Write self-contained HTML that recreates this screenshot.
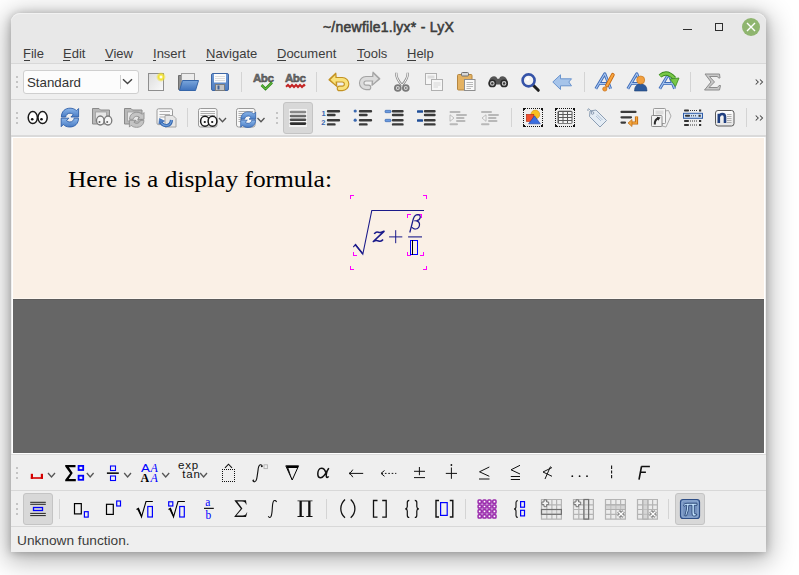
<!DOCTYPE html>
<html><head><meta charset="utf-8">
<style>
html,body{margin:0;padding:0;}
body{width:799px;height:575px;background:#ffffff;position:relative;overflow:hidden;font-family:"Liberation Sans",sans-serif;}
.a{position:absolute;}
svg{position:absolute;overflow:visible;}
#win{position:absolute;left:11px;top:13px;width:755px;height:539px;background:#efefef;border-radius:9px 9px 0 0;
 box-shadow:0 1px 8px 0 rgba(0,0,0,0.25),0 5px 26px 4px rgba(0,0,0,0.3);overflow:hidden;}
.menu{position:absolute;top:46px;font-size:13px;color:#3c3c3c;}
.menu u{text-decoration:none;}
.ul{position:absolute;height:1px;background:#3c3c3c;top:60px;}
.sep{position:absolute;width:1px;background:#d4d4d4;}
.hline{position:absolute;height:1px;}
.dots{position:absolute;width:2px;}
.dots i{position:absolute;left:0;width:2px;height:2px;background:#c4c4c4;}
</style></head>
<body>
<div id="win"></div>
<!-- title + menubar background -->
<div class="a" style="left:11px;top:13px;width:755px;height:50px;background:#e8e8e8;border-radius:9px 9px 0 0;box-shadow:inset 0 1px 0 #f2f2f2"></div>
<div class="hline" style="left:11px;top:63px;width:755px;background:#d8d8d8"></div>
<div class="a" style="left:0;top:19px;width:777px;text-align:center;font-weight:normal;font-size:14px;color:#3d3d3d;-webkit-text-stroke:0.55px #3d3d3d;letter-spacing:0.25px;">~/newfile1.lyx* - LyX</div>
<!-- window controls -->
<div class="a" style="left:683px;top:28.5px;width:8.5px;height:1.4px;background:#2e2e2e"></div>
<div class="a" style="left:715px;top:23px;width:6px;height:6px;border:1.5px solid #2e2e2e"></div>
<div class="a" style="left:742px;top:18px;width:18px;height:18px;border-radius:50%;background:#8fb56f"></div>
<svg style="left:742px;top:18px" width="18" height="18"><path d="M5 5L13 13M13 5L5 13" stroke="#fff" stroke-width="1.4"/></svg>
<!-- menu -->
<span class="menu" style="left:23px"><b style="font-weight:normal" class="m1">F</b>ile</span>
<span class="menu" style="left:63px"><b style="font-weight:normal" class="m1">E</b>dit</span>
<span class="menu" style="left:105px"><b style="font-weight:normal" class="m1">V</b>iew</span>
<span class="menu" style="left:153px"><b style="font-weight:normal" class="m1">I</b>nsert</span>
<span class="menu" style="left:206px"><b style="font-weight:normal" class="m1">N</b>avigate</span>
<span class="menu" style="left:277px"><b style="font-weight:normal" class="m1">D</b>ocument</span>
<span class="menu" style="left:357px"><b style="font-weight:normal" class="m1">T</b>ools</span>
<span class="menu" style="left:407px"><b style="font-weight:normal" class="m1">H</b>elp</span>
<div class="ul" style="left:24px;width:6px"></div>
<div class="ul" style="left:63px;width:7px"></div>
<div class="ul" style="left:105px;width:8px"></div>
<div class="ul" style="left:153px;width:3px"></div>
<div class="ul" style="left:206px;width:9px"></div>
<div class="ul" style="left:277px;width:9px"></div>
<div class="ul" style="left:357px;width:7px"></div>
<div class="ul" style="left:407px;width:9px"></div>
<!-- toolbar lines -->
<div class="hline" style="left:11px;top:99px;width:755px;background:#d8d8d8"></div>
<div class="hline" style="left:11px;top:135px;width:755px;height:2px;background:#dadada"></div>
<!-- doc frame -->
<div class="a" style="left:12px;top:137px;width:753px;height:317px;background:#ffffff"></div>
<div class="a" style="left:13px;top:138px;width:751px;height:160px;background:#faf0e6"></div>
<div class="hline" style="left:13px;top:298px;width:751px;background:#fdf7f0"></div>
<div class="a" style="left:13px;top:299px;width:751px;height:153px;background:#666666;border-top:1px solid #5c5c5c"></div>
<!-- math toolbar lines -->
<div class="hline" style="left:11px;top:454px;width:755px;background:#dddddd"></div>
<div class="hline" style="left:11px;top:490px;width:755px;background:#d8d8d8"></div>
<div class="hline" style="left:11px;top:526px;width:755px;background:#d8d8d8"></div>
<span class="a" style="left:17px;top:533px;font-size:13.7px;color:#3c3c3c">Unknown function.</span>

<!-- ===== toolbar 1 ===== -->
<div class="dots" style="left:16px;top:76px"><i style="top:0"></i><i style="top:5px"></i><i style="top:10px"></i></div>
<div class="a" style="left:23px;top:70px;width:114px;height:22px;border:1px solid #cfcfcf;border-radius:3px;background:#fcfcfc"></div>
<span class="a" style="left:27px;top:75px;font-size:13.3px;color:#333">Standard</span>
<div class="a" style="left:120px;top:75px;width:1px;height:14px;background:#d0d0d0"></div>
<svg style="left:122px;top:78px" width="11" height="7"><path d="M1 1.2L5.5 5.6L10 1.2" fill="none" stroke="#444" stroke-width="1.4"/></svg>
<div class="sep" style="left:241px;top:72px;height:20px"></div>
<div class="sep" style="left:316px;top:72px;height:20px"></div>
<div class="sep" style="left:584px;top:72px;height:20px"></div>
<div class="sep" style="left:690px;top:72px;height:20px"></div>
<svg style="left:755px;top:79px" width="9" height="6"><path d="M0.7 0.5L3.2 3L0.7 5.5M5 0.5L7.5 3L5 5.5" fill="none" stroke="#444" stroke-width="1.05"/></svg>
<!-- ===== toolbar 2 ===== -->
<div class="dots" style="left:16px;top:112px"><i style="top:0"></i><i style="top:5px"></i><i style="top:10px"></i></div>
<div class="sep" style="left:187px;top:108px;height:19px"></div>
<div class="dots" style="left:276px;top:112px"><i style="top:0"></i><i style="top:5px"></i><i style="top:10px"></i></div>
<div class="a" style="left:283px;top:102px;width:28px;height:30px;border:1px solid #c4c4c4;border-radius:3px;background:#d8d8d8"></div>
<div class="sep" style="left:511px;top:108px;height:19px"></div>
<div class="sep" style="left:746px;top:108px;height:19px"></div>
<svg style="left:755px;top:115px" width="9" height="6"><path d="M0.7 0.5L3.2 3L0.7 5.5M5 0.5L7.5 3L5 5.5" fill="none" stroke="#444" stroke-width="1.05"/></svg>
<!-- ===== math toolbar 1 ===== -->
<div class="dots" style="left:16px;top:467px"><i style="top:0"></i><i style="top:5px"></i><i style="top:10px"></i></div>
<!-- ===== math toolbar 2 ===== -->
<div class="dots" style="left:16px;top:503px"><i style="top:0"></i><i style="top:5px"></i><i style="top:10px"></i></div>
<div class="a" style="left:23px;top:493px;width:28px;height:30px;border:1px solid #c4c4c4;border-radius:3px;background:#d8d8d8"></div>
<div class="sep" style="left:59px;top:499px;height:20px"></div>
<div class="sep" style="left:326px;top:499px;height:20px"></div>
<div class="sep" style="left:465px;top:499px;height:20px"></div>
<div class="sep" style="left:668px;top:499px;height:20px"></div>
<div class="a" style="left:675px;top:493px;width:28px;height:30px;border:1px solid #c4c4c4;border-radius:3px;background:#d8d8d8"></div>
<!-- ===== document ===== -->
<span id="doctext" class="a" style="left:68px;top:167px;font-family:'Liberation Serif',serif;font-size:23px;color:#000;white-space:nowrap;transform:scaleX(1.105);transform-origin:0 0">Here is a display formula:</span>

<!-- ===== toolbar 1 icons ===== -->
<svg style="left:0;top:0" width="799" height="575">
<defs>
<linearGradient id="gNew" x1="0" y1="0" x2="1" y2="1"><stop offset="0" stop-color="#dcdcdc"/><stop offset="1" stop-color="#fafafa"/></linearGradient>
<radialGradient id="gStar"><stop offset="0" stop-color="#fffbd0"/><stop offset="0.5" stop-color="#f2e230"/><stop offset="1" stop-color="#f2e230" stop-opacity="0"/></radialGradient>
<linearGradient id="gFold" x1="0" y1="0" x2="0" y2="1"><stop offset="0" stop-color="#7aa6dc"/><stop offset="1" stop-color="#3f72bc"/></linearGradient>
<linearGradient id="gSave" x1="0" y1="0" x2="0" y2="1"><stop offset="0" stop-color="#6f9ad6"/><stop offset="1" stop-color="#4d7cc0"/></linearGradient>
</defs>
<!-- new -->
<rect x="148.5" y="73.5" width="15" height="17" fill="url(#gNew)" stroke="#8e8e8e"/>
<circle cx="161" cy="77" r="5" fill="url(#gStar)"/>
<circle cx="161" cy="77" r="1.2" fill="#fffde8"/>
<!-- open -->
<path d="M178.5 75.5 H186 L187.5 77 H194.5 V89.5 H178.5 Z" fill="#8f8f8f" stroke="#6e6e6e"/>
<rect x="181.5" y="73.5" width="13" height="10" fill="#ececec" stroke="#a0a0a0"/>
<path d="M182.5 80.5 L198.5 80.5 L195.5 90.5 L179.5 90.5 Z" fill="url(#gFold)" stroke="#3565a8"/>
<!-- save -->
<rect x="211.5" y="73.5" width="17" height="17" rx="1.5" fill="url(#gSave)" stroke="#3e66a4"/>
<rect x="214" y="74" width="12" height="8.5" fill="#fbfbfb"/>
<path d="M215 76.5H225M215 78.5H225M215 80.5H225" stroke="#d6d6d6" stroke-width="0.8"/>
<rect x="215.5" y="84.5" width="9" height="6" fill="#c4c4c4" stroke="#7c7c7c"/>
<rect x="217.5" y="85.5" width="2" height="4" fill="#3d5f96"/>
<!-- spell check -->
<text x="253" y="81.8" font-family="Liberation Sans" font-weight="bold" font-size="11.6" fill="#6e6e6e" stroke="#404040" stroke-width="0.45" letter-spacing="-0.5">Abc</text>
<path d="M261.5 85 L265.5 89 L272 82.5" fill="none" stroke="#2f8a1a" stroke-width="2.6"/>
<path d="M261.5 85 L265.5 89 L272 82.5" fill="none" stroke="#7cd050" stroke-width="1"/>
<text x="285" y="81.8" font-family="Liberation Sans" font-weight="bold" font-size="11.6" fill="#6e6e6e" stroke="#404040" stroke-width="0.45" letter-spacing="-0.5">Abc</text>
<path d="M286 86.8 L288 85 L290 87 L292 85 L294 87 L296 85 L298 87 L300 85 L302 87 L304 85 L305 86" fill="none" stroke="#c42424" stroke-width="2"/>
<!-- undo -->
<path d="M334 79.8 H342.3 A4.3 4.3 0 0 1 342.3 88.4 H339.5" fill="none" stroke="#c39222" stroke-width="5.6" stroke-linecap="round"/>
<path d="M329 79.8 L335.8 73.2 L336.8 86.4 Z" fill="#c39222" stroke="#c39222" stroke-width="1.2" stroke-linejoin="round"/>
<path d="M334 79.8 H342.3 A4.3 4.3 0 0 1 342.3 88.4 H339.5" fill="none" stroke="#f9e27c" stroke-width="3.4" stroke-linecap="round"/>
<path d="M330.5 79.8 L335.3 75 L335.8 84.7 Z" fill="#f9e27c"/>
<!-- redo -->
<path d="M373 78.8 H366 A4.3 4.3 0 0 0 366 87.4 H368.5" fill="none" stroke="#a4a4a4" stroke-width="5.6" stroke-linecap="round"/>
<path d="M379.8 78.8 L373 72.2 L372 85.4 Z" fill="#a4a4a4" stroke="#a4a4a4" stroke-width="1.2" stroke-linejoin="round"/>
<path d="M373 78.8 H366 A4.3 4.3 0 0 0 366 87.4 H368.5" fill="none" stroke="#dcdcdc" stroke-width="3.4" stroke-linecap="round"/>
<path d="M378.3 78.8 L373.5 74 L373 83.7 Z" fill="#dcdcdc"/>
<!-- cut -->
<path d="M396.2 72.8 Q396 79 402 85 M407.8 72.8 Q408 79 402 85" fill="none" stroke="#8a8a8a" stroke-width="2.4"/>
<path d="M396.2 72.8 Q396 79 402 85 M407.8 72.8 Q408 79 402 85" fill="none" stroke="#f6f6f6" stroke-width="1"/>
<circle cx="397.8" cy="88" r="2.9" fill="#d8d8d8" stroke="#7a7a7a" stroke-width="1.8"/>
<circle cx="405.8" cy="88" r="2.9" fill="#d8d8d8" stroke="#7a7a7a" stroke-width="1.8"/>
<circle cx="397.8" cy="88" r="0.9" fill="#7a7a7a"/>
<circle cx="405.8" cy="88" r="0.9" fill="#7a7a7a"/>
<!-- copy -->
<rect x="425.5" y="73.5" width="11" height="11" fill="#f6f6f6" stroke="#b0b0b0"/>
<rect x="427.5" y="75.5" width="7" height="3" fill="#dcdcdc"/>
<rect x="431.5" y="79.5" width="11" height="11" fill="#f6f6f6" stroke="#b0b0b0"/>
<path d="M433.5 83H440.5M433.5 85H440.5M433.5 87H438" stroke="#cfcfcf" stroke-width="0.8"/>
<!-- paste -->
<rect x="457.5" y="74.5" width="14.5" height="15.5" rx="1" fill="#e4b262" stroke="#b58640"/>
<rect x="461.5" y="72.5" width="7" height="3.5" rx="1" fill="#d8d8d8" stroke="#707070"/>
<rect x="464.5" y="79.5" width="10.5" height="11" fill="#fafafa" stroke="#8e8e8e"/>
<path d="M466.5 82.5H473M466.5 84.5H473M466.5 86.5H473M466.5 88.5H471" stroke="#a8a8a8" stroke-width="0.8"/>
<!-- binoculars -->
<path d="M488.5 84.5 Q488.7 78 492.5 76.4 Q494.8 75.7 496.3 77 L497.3 78.8 H499.1 L500.1 77 Q501.6 75.7 503.9 76.4 Q507.7 78 507.9 84.5 Z" fill="#555"/>
<circle cx="492.3" cy="83.4" r="3.1" fill="#d0d0d0" stroke="#2a2a2a" stroke-width="1.6"/>
<circle cx="504.1" cy="83.4" r="3.1" fill="#d0d0d0" stroke="#2a2a2a" stroke-width="1.6"/>
<circle cx="492.3" cy="83.4" r="1.2" fill="#3a3a3a"/>
<circle cx="504.1" cy="83.4" r="1.2" fill="#3a3a3a"/>
<!-- search -->
<line x1="533" y1="85" x2="538.3" y2="90.3" stroke="#1e1e1e" stroke-width="3" stroke-linecap="round"/>
<circle cx="528.6" cy="80.4" r="6" fill="#f2f2f2" stroke="#3553a8" stroke-width="2.6"/><circle cx="527.5" cy="79" r="1.8" fill="#ffffff"/>
<!-- back -->
<path d="M552.8 82 L560.5 74.8 V78.8 H571.5 L568.8 82 L571.5 85.8 H560.5 V89.5 Z" fill="#a6c4ea" stroke="#6a94ce" stroke-linejoin="round"/>
<!-- A! -->
<path d="M595.8 88.8 L604.8 73.8 L610.6 88.8 M599.6 83.6 H608.6" fill="none" stroke="#3f6cb8" stroke-width="3" stroke-linejoin="round"/><path d="M595.8 88.8 L604.8 73.8 L610.6 88.8 M599.6 83.6 H608.6" fill="none" stroke="#a8c6f0" stroke-width="1.1" stroke-linejoin="round"/>
<path d="M612.8 74.8 L607 85.5" stroke="#c86a10" stroke-width="3.8" stroke-linecap="round"/>
<path d="M612.8 74.8 L607 85.5" stroke="#f8a640" stroke-width="2" stroke-linecap="round"/>
<circle cx="604.8" cy="89" r="2.1" fill="#f29a30" stroke="#c86a10" stroke-width="0.7"/>
<!-- A person -->
<path d="M627.8 88.8 L636.8 73.8 L642.6 88.8 M631.6 83.6 H640.6" fill="none" stroke="#3f6cb8" stroke-width="3" stroke-linejoin="round"/><path d="M627.8 88.8 L636.8 73.8 L642.6 88.8 M631.6 83.6 H640.6" fill="none" stroke="#a8c6f0" stroke-width="1.1" stroke-linejoin="round"/>
<path d="M634.5 91 Q634.5 84 640.7 84 Q647 84 647 91 Z" fill="#2d5a9c" stroke="#1e3f74" stroke-width="0.6"/>
<circle cx="640.7" cy="80" r="4" fill="#f2a040" stroke="#c87a20" stroke-width="0.7"/>
<!-- A arrow -->
<path d="M659.8 88.8 L668.8 73.8 L674.6 88.8 M663.6 83.6 H672.6" fill="none" stroke="#3f6cb8" stroke-width="3" stroke-linejoin="round"/><path d="M659.8 88.8 L668.8 73.8 L674.6 88.8 M663.6 83.6 H672.6" fill="none" stroke="#a8c6f0" stroke-width="1.1" stroke-linejoin="round"/>
<path d="M660 76 Q667 70 674.5 78.5" fill="none" stroke="#3a8a1e" stroke-width="4.2"/>
<path d="M660 76 Q667 70 674.5 78.5" fill="none" stroke="#78c848" stroke-width="2.4"/>
<path d="M670 79 L679 78 L675.5 86.5 Z" fill="#78c848" stroke="#3a8a1e" stroke-width="0.8" stroke-linejoin="round"/>
<!-- sigma -->
<path d="M705 74 H719.5 L720 78 H718.5 L717.5 76.5 H709.5 L714.5 82 L709 87.5 H717.5 L719 85.5 H720.5 L719.5 90 H704.5 L711 82 Z" fill="#c8c8c8" stroke="#8c8c8c" stroke-width="1" stroke-linejoin="round"/>
</svg>

<!-- ===== toolbar 2 icons ===== -->
<svg style="left:0;top:0" width="799" height="575">
<defs>
<linearGradient id="gBar" x1="0" y1="0" x2="0" y2="1"><stop offset="0" stop-color="#8a8a8a"/><stop offset="1" stop-color="#2e2e2e"/></linearGradient>
</defs>
<!-- eyes -->
<ellipse cx="32.8" cy="117.6" rx="4.6" ry="6" fill="#fff" stroke="#1a1a1a" stroke-width="1.5"/>
<ellipse cx="42.6" cy="117.6" rx="4.6" ry="6" fill="#fff" stroke="#1a1a1a" stroke-width="1.5"/>
<circle cx="32.2" cy="119.3" r="1.3" fill="#111"/>
<circle cx="41.5" cy="119.3" r="1.3" fill="#111"/>
<!-- refresh -->
<defs><linearGradient id="gRef" x1="0" y1="0" x2="0" y2="1"><stop offset="0" stop-color="#8ab6ea"/><stop offset="1" stop-color="#4a7cc4"/></linearGradient></defs>
<path d="M61.4 117 C61.4 111.5 65 108.2 70 108.2 C73 108.2 75 109.2 76.5 110.7 L78.6 108.5 V117 H70.9 L73.3 114.6 C72.3 113.7 71 113.2 70 113.2 C67.5 113.2 65.9 115 65.7 117 Z" fill="url(#gRef)" stroke="#2f5fa8" stroke-width="0.9" stroke-linejoin="round"/>
<path d="M78.5 118.2 C78.5 123.7 74.8 127 69.8 127 C66.8 127 64.8 126 63.3 124.5 L61.2 126.7 V118.2 H68.9 L66.5 120.6 C67.5 121.5 68.8 122 69.8 122 C72.3 122 73.9 120.2 74.1 118.2 Z" fill="url(#gRef)" stroke="#2f5fa8" stroke-width="0.9" stroke-linejoin="round"/>
<!-- folder eyes gray -->
<path d="M92.5 108.5 H99 L100.5 110 H109.5 V124 H92.5 Z" fill="#b8b8b8" stroke="#8a8a8a"/>
<rect x="95.5" y="112" width="11" height="9" fill="#e8e8e8" stroke="#a0a0a0" stroke-width="0.8"/>
<ellipse cx="100.3" cy="120.5" rx="3.8" ry="4.5" fill="#f6f6f6" stroke="#7a7a7a" stroke-width="1.3"/>
<ellipse cx="108" cy="120.5" rx="3.8" ry="4.5" fill="#f6f6f6" stroke="#7a7a7a" stroke-width="1.3"/>
<circle cx="99.5" cy="122" r="1" fill="#666"/>
<circle cx="107.2" cy="122" r="1" fill="#666"/>
<!-- folder refresh gray -->
<path d="M124.5 108.5 H131 L132.5 110 H142 V124 H124.5 Z" fill="#b8b8b8" stroke="#8a8a8a"/>
<rect x="127.5" y="112" width="11" height="9" fill="#e8e8e8" stroke="#a0a0a0" stroke-width="0.8"/>
<g transform="translate(129.4 112.3) scale(0.84 0.8) translate(-61.2 -108.2)">
<path d="M61.4 117 C61.4 111.5 65 108.2 70 108.2 C73 108.2 75 109.2 76.5 110.7 L78.6 108.5 V117 H70.9 L73.3 114.6 C72.3 113.7 71 113.2 70 113.2 C67.5 113.2 65.9 115 65.7 117 Z" fill="#c4c4c4" stroke="#8a8a8a" stroke-width="1" stroke-linejoin="round"/>
<path d="M78.5 118.2 C78.5 123.7 74.8 127 69.8 127 C66.8 127 64.8 126 63.3 124.5 L61.2 126.7 V118.2 H68.9 L66.5 120.6 C67.5 121.5 68.8 122 69.8 122 C72.3 122 73.9 120.2 74.1 118.2 Z" fill="#c4c4c4" stroke="#8a8a8a" stroke-width="1" stroke-linejoin="round"/>
</g>
<!-- doc arrow -->
<rect x="157" y="108.8" width="15.5" height="15.8" rx="1.5" fill="#f8f8f8" stroke="#9a9a9a"/>
<path d="M159.5 111.5H170M159.5 114.5H170M159.5 117H166" stroke="#b0b0b0" stroke-width="1"/>
<path d="M165 115.5 H173 L176 118.5 V127 H165 Z" fill="#e6e6e6" stroke="#a4a4a4"/>
<path d="M160.5 121 Q162 126 167 125.5 Q171 125 171.5 120" fill="none" stroke="#2f62ac" stroke-width="3.2"/>
<path d="M160.5 121 Q162 126 167 125.5 Q171 125 171.5 120" fill="none" stroke="#6a9ad8" stroke-width="1.4"/>
<path d="M158.8 124 L159.5 118.5 L164.5 121 Z" fill="#4a7cc4" stroke="#2f62ac" stroke-width="0.6"/>
<!-- doc eyes + chevron -->
<rect x="198.5" y="108.5" width="18.5" height="18.5" rx="2" fill="#f8f8f8" stroke="#9a9a9a"/>
<path d="M200.5 111.5H215M200.5 113.5H215M200.5 115.5H215" stroke="#9a9a9a" stroke-width="0.8"/>
<ellipse cx="205" cy="121.2" rx="4.4" ry="5" fill="#fafafa" stroke="#1a1a1a" stroke-width="1.5"/>
<ellipse cx="212.5" cy="121.2" rx="4.4" ry="5" fill="#fafafa" stroke="#1a1a1a" stroke-width="1.5"/>
<circle cx="204.8" cy="122" r="1.1" fill="#111"/>
<circle cx="212.2" cy="122" r="1.1" fill="#111"/>
<path d="M219 118 L222.5 121.8 L226 118" fill="none" stroke="#555" stroke-width="1.3"/>
<!-- doc refresh + chevron -->
<rect x="236.5" y="108.5" width="18.5" height="18.5" rx="2" fill="#f8f8f8" stroke="#9a9a9a"/>
<path d="M238.5 111.5H253M238.5 113.5H253M238.5 115.5H253M238.5 117.5H242M238.5 119.5H242M238.5 121.5H242" stroke="#9a9a9a" stroke-width="0.8"/>
<g transform="translate(240.7 111.9) scale(0.86 0.83) translate(-61.2 -108.2)">
<path d="M61.4 117 C61.4 111.5 65 108.2 70 108.2 C73 108.2 75 109.2 76.5 110.7 L78.6 108.5 V117 H70.9 L73.3 114.6 C72.3 113.7 71 113.2 70 113.2 C67.5 113.2 65.9 115 65.7 117 Z" fill="url(#gRef)" stroke="#2f5fa8" stroke-width="0.9" stroke-linejoin="round"/>
<path d="M78.5 118.2 C78.5 123.7 74.8 127 69.8 127 C66.8 127 64.8 126 63.3 124.5 L61.2 126.7 V118.2 H68.9 L66.5 120.6 C67.5 121.5 68.8 122 69.8 122 C72.3 122 73.9 120.2 74.1 118.2 Z" fill="url(#gRef)" stroke="#2f5fa8" stroke-width="0.9" stroke-linejoin="round"/>
</g>
<path d="M257.5 118 L261 121.8 L264.5 118" fill="none" stroke="#555" stroke-width="1.3"/>
<!-- standard (selected) -->
<rect x="289" y="109" width="18" height="18" fill="#f2f2f2"/>
<g stroke="url(#gBar)" stroke-width="2.6" stroke-linecap="round">
<path d="M291 112H305M291 116H305M291 119.8H305M291 123.6H305"/>
</g>
<!-- numbered list -->
<text x="321.5" y="116" font-family="Liberation Sans" font-weight="bold" font-size="7.5" fill="#3a68b0">1</text>
<text x="321.2" y="125.3" font-family="Liberation Sans" font-weight="bold" font-size="7.5" fill="#3a68b0">2</text>
<g stroke-width="2.4" stroke-linecap="round" fill="none">
<path d="M328 111.3H339M328 115H334.5M328 120.3H339M328 124.4H334.5" stroke="#3a3a3a"/>
</g>
<!-- bullet list -->
<circle cx="355.2" cy="111" r="1.6" fill="#3a68b0"/>
<circle cx="355.2" cy="120.2" r="1.6" fill="#3a68b0"/>
<path d="M360 111.3H371M360 115H366.5M360 120.3H371M360 124.4H366.5" stroke="#3a3a3a" stroke-width="2.4" stroke-linecap="round"/>
<!-- description list -->
<rect x="385" y="110.3" width="6" height="2.4" rx="0.8" fill="#6a9ae0" stroke="#2e5ca8" stroke-width="0.6"/>
<rect x="385" y="119.3" width="6" height="2.4" rx="0.8" fill="#6a9ae0" stroke="#2e5ca8" stroke-width="0.6"/>
<path d="M393 111.3H402.5M393 115H402.5M393 120.3H402.5M393 124.4H402.5" stroke="#3a3a3a" stroke-width="2.4" stroke-linecap="round"/>
<rect x="417" y="110.3" width="6" height="2.4" rx="0.5" fill="#1f4e98"/>
<rect x="417" y="119.3" width="6" height="2.4" rx="0.5" fill="#1f4e98"/>
<path d="M425 111.3H434.5M425 115H434.5M425 120.3H434.5M425 124.4H434.5" stroke="#3a3a3a" stroke-width="2.4" stroke-linecap="round"/>
<!-- depth increase (light) -->
<path d="M450.5 111.9H459.5M457 115H466M457 118H463.5M457 121H464.5M450.5 124.2H457" stroke="#b8b8b8" stroke-width="2" stroke-linecap="round"/>
<path d="M450 114.8 L454 118 L450 121.3 Z" fill="#f4f4f4" stroke="#b0b0b0" stroke-width="0.8"/>
<!-- depth decrease (light) -->
<path d="M482 111.9H491M489 115H498M489 118H495.5M489 121H496.5M482 124.2H488.5" stroke="#b8b8b8" stroke-width="2" stroke-linecap="round"/>
<path d="M486 114.8 L482 118 L486 121.3 Z" fill="#f4f4f4" stroke="#b0b0b0" stroke-width="0.8"/>
<!-- graphics -->
<g fill="#111"><rect x="525" y="108" width="1" height="1"/><rect x="525" y="126" width="1" height="1"/><rect x="527" y="108" width="1" height="1"/><rect x="527" y="126" width="1" height="1"/><rect x="529" y="108" width="1" height="1"/><rect x="529" y="126" width="1" height="1"/><rect x="531" y="108" width="1" height="1"/><rect x="531" y="126" width="1" height="1"/><rect x="533" y="108" width="1" height="1"/><rect x="533" y="126" width="1" height="1"/><rect x="535" y="108" width="1" height="1"/><rect x="535" y="126" width="1" height="1"/><rect x="537" y="108" width="1" height="1"/><rect x="537" y="126" width="1" height="1"/><rect x="539" y="108" width="1" height="1"/><rect x="539" y="126" width="1" height="1"/><rect x="523" y="110" width="1" height="1"/><rect x="542" y="110" width="1" height="1"/><rect x="523" y="112" width="1" height="1"/><rect x="542" y="112" width="1" height="1"/><rect x="523" y="114" width="1" height="1"/><rect x="542" y="114" width="1" height="1"/><rect x="523" y="116" width="1" height="1"/><rect x="542" y="116" width="1" height="1"/><rect x="523" y="118" width="1" height="1"/><rect x="542" y="118" width="1" height="1"/><rect x="523" y="120" width="1" height="1"/><rect x="542" y="120" width="1" height="1"/><rect x="523" y="122" width="1" height="1"/><rect x="542" y="122" width="1" height="1"/><rect x="523" y="124" width="1" height="1"/><rect x="542" y="124" width="1" height="1"/><rect x="523" y="108" width="2" height="2"/><rect x="541" y="108" width="2" height="2"/><rect x="523" y="125" width="2" height="2"/><rect x="541" y="125" width="2" height="2"/></g>
<circle cx="535.3" cy="114.5" r="4.4" fill="#f8c020" stroke="#d09010" stroke-width="0.6"/>
<rect x="526.3" y="114.4" width="7.5" height="7" fill="#f05030" stroke="#b02a10" stroke-width="0.6"/>
<path d="M534.5 115.8 L540.3 123.8 H528.6 Z" fill="#3a6ee0" stroke="#1e3ea0" stroke-width="0.6"/>
<!-- table -->
<g fill="#111"><rect x="557" y="108" width="1" height="1"/><rect x="557" y="126" width="1" height="1"/><rect x="559" y="108" width="1" height="1"/><rect x="559" y="126" width="1" height="1"/><rect x="561" y="108" width="1" height="1"/><rect x="561" y="126" width="1" height="1"/><rect x="563" y="108" width="1" height="1"/><rect x="563" y="126" width="1" height="1"/><rect x="565" y="108" width="1" height="1"/><rect x="565" y="126" width="1" height="1"/><rect x="567" y="108" width="1" height="1"/><rect x="567" y="126" width="1" height="1"/><rect x="569" y="108" width="1" height="1"/><rect x="569" y="126" width="1" height="1"/><rect x="571" y="108" width="1" height="1"/><rect x="571" y="126" width="1" height="1"/><rect x="555" y="110" width="1" height="1"/><rect x="574" y="110" width="1" height="1"/><rect x="555" y="112" width="1" height="1"/><rect x="574" y="112" width="1" height="1"/><rect x="555" y="114" width="1" height="1"/><rect x="574" y="114" width="1" height="1"/><rect x="555" y="116" width="1" height="1"/><rect x="574" y="116" width="1" height="1"/><rect x="555" y="118" width="1" height="1"/><rect x="574" y="118" width="1" height="1"/><rect x="555" y="120" width="1" height="1"/><rect x="574" y="120" width="1" height="1"/><rect x="555" y="122" width="1" height="1"/><rect x="574" y="122" width="1" height="1"/><rect x="555" y="124" width="1" height="1"/><rect x="574" y="124" width="1" height="1"/><rect x="555" y="108" width="2" height="2"/><rect x="573" y="108" width="2" height="2"/><rect x="555" y="125" width="2" height="2"/><rect x="573" y="125" width="2" height="2"/></g>
<rect x="557.5" y="110.8" width="15" height="13" rx="1.5" fill="#5a5a5a"/>
<g fill="#f4f4f4">
<rect x="559" y="112" width="3.5" height="2"/><rect x="563.5" y="112" width="3.5" height="2"/><rect x="568" y="112" width="3.5" height="2"/>
<rect x="559" y="115" width="3.5" height="2"/><rect x="563.5" y="115" width="3.5" height="2"/><rect x="568" y="115" width="3.5" height="2"/>
<rect x="559" y="118" width="3.5" height="2"/><rect x="563.5" y="118" width="3.5" height="2"/><rect x="568" y="118" width="3.5" height="2"/>
<rect x="559" y="121" width="3.5" height="2"/><rect x="563.5" y="121" width="3.5" height="2"/><rect x="568" y="121" width="3.5" height="2"/>
</g>
<!-- tag -->
<path d="M590 111 L596 110 L606.5 120.5 L600 127 L589.5 116.5 Z" fill="#e4ecf4" stroke="#8094ac" stroke-width="0.9" stroke-linejoin="round"/>
<circle cx="592.5" cy="113" r="1.3" fill="none" stroke="#7a8ca4" stroke-width="0.8"/>
<path d="M592 112 Q587 106 588 111" fill="none" stroke="#8094ac" stroke-width="0.9"/>
<path d="M596 116L601 121M597 114.5L602.5 120" stroke="#9ab0cc" stroke-width="0.7"/>
<!-- lines + return -->
<path d="M621.5 111.9H635.5M621.5 117.3H631M621.5 122.6H625" stroke="#3a3a3a" stroke-width="2.2" stroke-linecap="round"/>
<path d="M636.5 116.5 V123 H630.5" fill="none" stroke="#c06a10" stroke-width="3.2"/>
<path d="M636.5 116.5 V123 H630.5" fill="none" stroke="#f4a840" stroke-width="1.4"/>
<path d="M628 123 L632 119.5 V126.5 Z" fill="#f4a840" stroke="#c06a10" stroke-width="0.7" stroke-linejoin="round"/>
<!-- doc link -->
<path d="M665 111 L668.5 110.5 L671 116 L666 127 L662 126 Z" fill="#f0f0f0" stroke="#9a9a9a" stroke-width="0.8"/>
<rect x="653.5" y="108.5" width="12" height="15" rx="0.8" fill="#f6f6f6" stroke="#9a9a9a" stroke-width="1"/>
<rect x="655.5" y="110.5" width="8" height="4" fill="#dcdcdc"/>
<rect x="651.5" y="115.5" width="10.5" height="11" rx="0.8" fill="#f2f2f2" stroke="#8a8a8a" stroke-width="1"/>
<path d="M654.8 124.5 Q654.5 119.5 658.5 118.3" fill="none" stroke="#2a2a2a" stroke-width="2"/>
<path d="M656.8 116.8 L660.5 117.5 L658.2 120.8 Z" fill="#2a2a2a"/>
<!-- toc -->
<g fill="#333">
<rect x="684" y="109.5" width="5" height="2" rx="0.8"/><rect x="690" y="110" width="1" height="1"/><rect x="692" y="110" width="1" height="1"/><rect x="694" y="110" width="1" height="1"/><rect x="696" y="110" width="1" height="1"/><rect x="699" y="109.5" width="2.2" height="2"/>
<rect x="684" y="120" width="5" height="2" rx="0.8"/><rect x="690" y="120.5" width="1" height="1"/><rect x="692" y="120.5" width="1" height="1"/><rect x="694" y="120.5" width="1" height="1"/><rect x="696" y="120.5" width="1" height="1"/><rect x="699" y="120" width="2.2" height="2"/>
<rect x="684" y="124" width="5" height="2" rx="0.8"/><rect x="690" y="124.5" width="1" height="1"/><rect x="692" y="124.5" width="1" height="1"/><rect x="694" y="124.5" width="1" height="1"/><rect x="696" y="124.5" width="1" height="1"/><rect x="699" y="124" width="2.2" height="2"/>
</g>
<rect x="683.5" y="113.3" width="19" height="5" fill="#cfe0f4" stroke="#2e5ca8" stroke-width="1"/>
<g fill="#333"><rect x="685" y="114.8" width="5" height="2" rx="0.8"/><rect x="691" y="115.3" width="1" height="1"/><rect x="693" y="115.3" width="1" height="1"/><rect x="695" y="115.3" width="1" height="1"/><rect x="698.5" y="114.8" width="2.2" height="2"/></g>
<!-- note -->
<defs><linearGradient id="gNote" x1="0" y1="0" x2="0" y2="1"><stop offset="0" stop-color="#ffffff"/><stop offset="1" stop-color="#e4e4e4"/></linearGradient></defs><rect x="715.5" y="110.5" width="18.5" height="15.5" rx="2.5" fill="url(#gNote)" stroke="#5a5a5a" stroke-width="1"/>
<path d="M718.8 113.8 V123 M718.8 116.8 Q719.8 114 722.3 114 Q725 114 725 117 V123" fill="none" stroke="#1f3f80" stroke-width="2.6"/>
<path d="M727 114.5H731.5M727 116.5H731.5M727 118.5H731.5M727 120.5H731.5M727 122.5H731.5" stroke="#a8a8a8" stroke-width="0.9"/>
</svg>

<!-- ===== math toolbar 1 icons ===== -->
<svg style="left:0;top:0" width="799" height="575" font-family="Liberation Sans">
<g fill="#d40000"><rect x="30.8" y="473.8" width="2.2" height="5"/><rect x="40.8" y="473.8" width="2.2" height="5"/><rect x="30.8" y="477.2" width="12.2" height="1.6"/></g>
<g fill="none" stroke="#555" stroke-width="1.3">
<path d="M48 473 L51.5 477 L55 473"/>
<path d="M86.8 473 L90.2 477 L93.6 473"/>
<path d="M124.2 473 L127.6 477 L131 473"/>
<path d="M162.2 473 L165.7 477 L169.2 473"/>
<path d="M200.2 473 L203.6 477 L207 473"/>
</g>
<path d="M65.2 465 H75.5 V467.3 H68.9 L72.7 473 L68.7 479 H75.8 V481.3 H65.2 V479.8 L70.1 473.2 L65.2 466.4 Z" fill="#000"/>
<rect x="78.6" y="465.9" width="4.6" height="4.1" fill="none" stroke="#0000ff" stroke-width="1.8"/>
<rect x="78.6" y="475.7" width="4.6" height="4.1" fill="none" stroke="#0000ff" stroke-width="1.8"/>
<rect x="110.5" y="466" width="5" height="4.5" fill="none" stroke="#0000ff" stroke-width="1.1"/>
<rect x="106.9" y="472.4" width="11.9" height="1.5" fill="#000"/>
<rect x="110.5" y="476" width="5" height="4.5" fill="none" stroke="#0000ff" stroke-width="1.1"/>
<text x="141" y="471.7" font-size="11" fill="#0000ff" transform="translate(141 0) scale(1.22 1) translate(-141 0)">A</text>
<text x="150.5" y="471.8" font-family="Liberation Serif" font-style="italic" font-size="12" fill="#0000ff">A</text>
<text x="140.5" y="481.6" font-family="Liberation Serif" font-weight="bold" font-size="12" fill="#000">A</text>
<text x="150.5" y="481.8" font-family="Liberation Serif" font-style="italic" font-size="12" fill="#0000ff">A</text>
<text x="178" y="468.6" font-size="11.5" fill="#111" letter-spacing="0.8">exp</text>
<text x="182.3" y="478.4" font-size="11.5" fill="#111" letter-spacing="0.8">tan</text>
<!-- hat box -->
<g fill="#111"><rect x="222" y="469" width="1" height="1"/><rect x="222" y="481" width="1" height="1"/><rect x="224" y="469" width="1" height="1"/><rect x="224" y="481" width="1" height="1"/><rect x="226" y="469" width="1" height="1"/><rect x="226" y="481" width="1" height="1"/><rect x="228" y="469" width="1" height="1"/><rect x="228" y="481" width="1" height="1"/><rect x="230" y="469" width="1" height="1"/><rect x="230" y="481" width="1" height="1"/><rect x="232" y="469" width="1" height="1"/><rect x="232" y="481" width="1" height="1"/><rect x="234" y="469" width="1" height="1"/><rect x="234" y="481" width="1" height="1"/><rect x="222" y="471" width="1" height="1"/><rect x="234" y="471" width="1" height="1"/><rect x="222" y="473" width="1" height="1"/><rect x="234" y="473" width="1" height="1"/><rect x="222" y="475" width="1" height="1"/><rect x="234" y="475" width="1" height="1"/><rect x="222" y="477" width="1" height="1"/><rect x="234" y="477" width="1" height="1"/><rect x="222" y="479" width="1" height="1"/><rect x="234" y="479" width="1" height="1"/></g>
<path d="M225 467.8 L228.5 464.2 L232 467.8" fill="none" stroke="#111" stroke-width="1.1"/>
<!-- integral with box -->
<path d="M262.2 466.6 Q262 464.6 260.4 464.8 Q258.4 465.2 258 470.5 L257.2 476 Q256.5 481.7 254.4 481.8 Q252.9 481.8 252.9 480.3" fill="none" stroke="#111" stroke-width="1.15"/><circle cx="261.7" cy="466.5" r="0.8" fill="#111"/><circle cx="253.4" cy="480.3" r="0.8" fill="#111"/>
<rect x="264" y="464.8" width="3.4" height="3.8" fill="none" stroke="#b0b0b0" stroke-width="0.9"/>
<!-- nabla -->
<path d="M285.8 465.8 H298.6 L292.2 480 Z" fill="none" stroke="#000" stroke-width="1" stroke-linejoin="miter"/>
<path d="M286.5 466 H298 V468 H287.4 Z" fill="#000"/>
<path d="M286.2 466 L292.2 480 L290.8 475.5 L288.4 468 Z" fill="#000"/>
<path d="M326 473 C325 469.5 323.5 468.2 321.5 468.2 C319 468.2 317.8 471.5 317.8 474 C317.8 476.5 319 477.8 320.8 477.8 C323.5 477.8 326 473.5 328.8 468.2 M327.3 470.5 C326.5 473 326 476 326.5 477 C327 477.8 328 477.3 328.6 476.3" fill="none" stroke="#111" stroke-width="1.5"/>
<path d="M352.8 469.6 Q351.5 472.5 349 473.4 Q351.5 474.3 352.8 477.2 M349.3 473.4 H363.2" fill="none" stroke="#111" stroke-width="1"/>
<!-- dashed left arrow -->
<path d="M384.5 470.5 L381 473.4 L384.5 476.3" fill="none" stroke="#111" stroke-width="1"/>
<path d="M381.5 473.4 H396.3" stroke="#111" stroke-width="1" stroke-dasharray="1.6 1.8"/>
<!-- pm -->
<path d="M419.4 467 V475.2 M414 471.3 H425 M414 477.6 H425" stroke="#111" stroke-width="1"/>
<!-- dot plus -->
<circle cx="451.4" cy="465" r="0.9" fill="#111"/>
<path d="M451.4 467.5 V478.8 M445.8 473.4 H457" stroke="#111" stroke-width="1"/>
<!-- leq -->
<path d="M489.3 467 L479.5 471.8 L489.3 476.3 M479 479 H489.5" fill="none" stroke="#111" stroke-width="1"/>
<!-- leqq -->
<path d="M520 465.3 L511 469.8 L520 474 M510.8 476.5 H520 M510.8 479.5 H520" fill="none" stroke="#111" stroke-width="1"/>
<!-- nless -->
<path d="M552 467.5 L543 472 L552 476.3 M550.5 466.5 L545 479" fill="none" stroke="#111" stroke-width="1"/>
<!-- ldots -->
<circle cx="572.3" cy="476.2" r="0.9" fill="#111"/><circle cx="579.6" cy="476.2" r="0.9" fill="#111"/><circle cx="587" cy="476.2" r="0.9" fill="#111"/>
<!-- vdots dashed -->
<path d="M611.6 465.5 V469 M611.6 470.5 V473.5 M611.6 475 V478.3" stroke="#111" stroke-width="1.1"/>
<path d="M641.3 466.5 H649.9 M641.5 466.5 L639 479.6 M640.4 472.3 H645.9" fill="none" stroke="#111" stroke-width="1.6"/>
</svg>

<!-- ===== math toolbar 2 icons ===== -->
<svg style="left:0;top:0" width="799" height="575" font-family="Liberation Serif">
<!-- display (selected) -->
<path d="M30.2 502.3H45.8M30.2 504.3H45.8M30.2 513.4H45.8M30.2 515.6H45.8" stroke="#222" stroke-width="1"/>
<rect x="33.5" y="507.5" width="9" height="3" fill="none" stroke="#0000ff" stroke-width="1.3"/>
<!-- subscript -->
<rect x="74.5" y="503.6" width="6.8" height="10.3" fill="none" stroke="#000" stroke-width="1.2"/>
<rect x="84.4" y="511.7" width="3.8" height="5.4" fill="none" stroke="#0000ff" stroke-width="1.2"/>
<!-- superscript -->
<rect x="106.5" y="504.3" width="6.8" height="10.1" fill="none" stroke="#000" stroke-width="1.2"/>
<rect x="116.7" y="501" width="3.8" height="5" fill="none" stroke="#0000ff" stroke-width="1.2"/>
<!-- sqrt -->
<path d="M136.5 509.5 L138.5 508.3 L141.5 517 L146 501.5 H152.8" fill="none" stroke="#000" stroke-width="1.1"/>
<path d="M137.8 508.7 L141.2 515.5" stroke="#000" stroke-width="1.6"/>
<rect x="147.8" y="506.5" width="4.6" height="10.5" fill="none" stroke="#0000ff" stroke-width="1.2"/>
<!-- root -->
<rect x="168.7" y="501.8" width="4.1" height="4.2" fill="none" stroke="#0000ff" stroke-width="1.2"/>
<path d="M168.5 509.5 L170.5 508.3 L173.5 517 L178 501.5 H184.9" fill="none" stroke="#000" stroke-width="1.1"/>
<path d="M169.8 508.7 L173.2 515.5" stroke="#000" stroke-width="1.6"/>
<rect x="179.7" y="506.5" width="4.6" height="10.5" fill="none" stroke="#0000ff" stroke-width="1.2"/>
<!-- a/b -->
<text x="205.3" y="506.4" font-size="11.5" fill="#0000ff">a</text>
<rect x="204" y="507.8" width="9.8" height="1.1" fill="#000"/>
<text x="205.5" y="518.6" font-size="11.5" fill="#0000ff">b</text>
<!-- sum -->
<path d="M234.6 500.3 H246 L246.6 504.5 H246 Q245.5 501.6 242 501.6 H237.2 L242.4 508.5 L236.4 515.6 H242.5 Q246 515.6 246.8 512.6 H247.3 L246 517 H234.4 V516.6 L240.8 508.8 L234.6 500.8 Z" fill="#111"/>
<!-- integral -->
<path d="M268.3 516.3 Q269.5 518.6 271 516.5 Q272 514.5 272.3 508 Q272.6 501.8 273.8 500.8 Q275.3 499.8 276.6 502" fill="none" stroke="#111" stroke-width="1.1"/>
<!-- prod -->
<path d="M297.5 500.5 H312.5 V501.3 H310.5 V516 H312.5 V517 H306.3 V516 H308.2 V501.5 H301.8 V516 H303.8 V517 H297.5 V516 H299.5 V501.3 H297.5 Z" fill="#111"/>
<!-- () -->
<path d="M345 499.6 Q340.8 503.5 340.8 508.7 Q340.8 514 345 517.8" fill="none" stroke="#111" stroke-width="1.3"/>
<path d="M350.7 499.6 Q354.9 503.5 354.9 508.7 Q354.9 514 350.7 517.8" fill="none" stroke="#111" stroke-width="1.3"/>
<!-- [] -->
<path d="M377.5 500.5 H373.5 V517.2 H377.5 M382.2 500.5 H386.2 V517.2 H382.2" fill="none" stroke="#111" stroke-width="1.3"/>
<!-- {} -->
<path d="M409.3 500.3 Q407.3 500.3 407.3 502.5 V506.5 Q407.3 508.6 405.3 508.8 Q407.3 509 407.3 511 V515.2 Q407.3 517.5 409.3 517.5" fill="none" stroke="#111" stroke-width="1.2"/>
<path d="M414.8 500.3 Q416.8 500.3 416.8 502.5 V506.5 Q416.8 508.6 418.8 508.8 Q416.8 509 416.8 511 V515.2 Q416.8 517.5 414.8 517.5" fill="none" stroke="#111" stroke-width="1.2"/>
<!-- [box] -->
<path d="M439 500.5 H436 V517 H439 M449.8 500.5 H452.8 V517 H449.8" fill="none" stroke="#111" stroke-width="1.4"/>
<rect x="440.6" y="502.6" width="6.6" height="12.8" fill="none" stroke="#0000ff" stroke-width="1.2"/>
<!-- purple matrix -->
<rect x="478" y="500.2" width="18" height="18" fill="#d2a4dc"/>
<rect x="478.1" y="500.1" width="3.2" height="3.2" rx="0.8" fill="#fff" stroke="#9a2aac" stroke-width="1.5"/>
<rect x="478.1" y="504.9" width="3.2" height="3.2" rx="0.8" fill="#fff" stroke="#9a2aac" stroke-width="1.5"/>
<rect x="478.1" y="509.8" width="3.2" height="3.2" rx="0.8" fill="#fff" stroke="#9a2aac" stroke-width="1.5"/>
<rect x="478.1" y="514.8" width="3.2" height="3.2" rx="0.8" fill="#fff" stroke="#9a2aac" stroke-width="1.5"/>
<rect x="482.9" y="500.1" width="3.2" height="3.2" rx="0.8" fill="#fff" stroke="#9a2aac" stroke-width="1.5"/>
<rect x="482.9" y="504.9" width="3.2" height="3.2" rx="0.8" fill="#fff" stroke="#9a2aac" stroke-width="1.5"/>
<rect x="482.9" y="509.8" width="3.2" height="3.2" rx="0.8" fill="#fff" stroke="#9a2aac" stroke-width="1.5"/>
<rect x="482.9" y="514.8" width="3.2" height="3.2" rx="0.8" fill="#fff" stroke="#9a2aac" stroke-width="1.5"/>
<rect x="487.8" y="500.1" width="3.2" height="3.2" rx="0.8" fill="#fff" stroke="#9a2aac" stroke-width="1.5"/>
<rect x="487.8" y="504.9" width="3.2" height="3.2" rx="0.8" fill="#fff" stroke="#9a2aac" stroke-width="1.5"/>
<rect x="487.8" y="509.8" width="3.2" height="3.2" rx="0.8" fill="#fff" stroke="#9a2aac" stroke-width="1.5"/>
<rect x="487.8" y="514.8" width="3.2" height="3.2" rx="0.8" fill="#fff" stroke="#9a2aac" stroke-width="1.5"/>
<rect x="492.8" y="500.1" width="3.2" height="3.2" rx="0.8" fill="#fff" stroke="#9a2aac" stroke-width="1.5"/>
<rect x="492.8" y="504.9" width="3.2" height="3.2" rx="0.8" fill="#fff" stroke="#9a2aac" stroke-width="1.5"/>
<rect x="492.8" y="509.8" width="3.2" height="3.2" rx="0.8" fill="#fff" stroke="#9a2aac" stroke-width="1.5"/>
<rect x="492.8" y="514.8" width="3.2" height="3.2" rx="0.8" fill="#fff" stroke="#9a2aac" stroke-width="1.5"/>
<!-- cases -->
<path d="M517.8 500.6 Q516 500.6 516 502.6 V506.8 Q516 509 514 509 Q516 509 516 511.2 V515.4 Q516 517.4 517.8 517.4" fill="none" stroke="#111" stroke-width="1.1"/>
<rect x="520.6" y="501.6" width="3.9" height="5.6" fill="none" stroke="#0000ff" stroke-width="1.2"/>
<rect x="520.6" y="510.3" width="3.9" height="5.6" fill="none" stroke="#0000ff" stroke-width="1.2"/>
</svg>
<svg style="left:0;top:0" width="799" height="575">
<rect x="541" y="499" width="19.9" height="19.6" fill="#ececec"/>
<path d="M541.5 499 V519.6M546.8 499 V519.6M551.9 499 V519.6M556.6 499 V519.6M561.4 499 V519.6M541 499.5 H561.9M541 504.8 H561.9M541 509.5 H561.9M541 514.3 H561.9M541 519.1 H561.9" stroke="#b4b4b4" stroke-width="1.2" fill="none"/>
<rect x="541.5" y="509.5" width="19.9" height="4.8" fill="#d8d8d8" fill-opacity="0.35" stroke="#707070" stroke-width="1.2"/>
<path d="M544.0 499.9 L546.6 499.9 L546.6 502.0 L548.7 502.0 L548.7 504.6 L546.6 504.6 L546.6 506.7 L544.0 506.7 L544.0 504.6 L541.9 504.6 L541.9 502.0 L544.0 502.0 Z" fill="#f4f4f4" stroke="#6a6a6a" stroke-width="0.9"/>
<rect x="573" y="499" width="19.9" height="19.6" fill="#ececec"/>
<path d="M573.5 499 V519.6M578.8 499 V519.6M583.9 499 V519.6M588.6 499 V519.6M593.4 499 V519.6M573 499.5 H593.9M573 504.8 H593.9M573 509.5 H593.9M573 514.3 H593.9M573 519.1 H593.9" stroke="#b4b4b4" stroke-width="1.2" fill="none"/>
<rect x="583.9" y="499.5" width="4.7" height="19.6" fill="#d8d8d8" fill-opacity="0.35" stroke="#707070" stroke-width="1.2"/>
<path d="M576.0 499.9 L578.6 499.9 L578.6 502.0 L580.7 502.0 L580.7 504.6 L578.6 504.6 L578.6 506.7 L576.0 506.7 L576.0 504.6 L573.9 504.6 L573.9 502.0 L576.0 502.0 Z" fill="#f4f4f4" stroke="#6a6a6a" stroke-width="0.9"/>
<rect x="605" y="499" width="19.9" height="19.6" fill="#ececec"/>
<path d="M605.5 499 V519.6M610.8 499 V519.6M615.9 499 V519.6M620.6 499 V519.6M625.4 499 V519.6M605 499.5 H625.9M605 504.8 H625.9M605 509.5 H625.9M605 514.3 H625.9M605 519.1 H625.9" stroke="#b4b4b4" stroke-width="1.2" fill="none"/>
<rect x="605.5" y="504.8" width="19.9" height="4.7" fill="#c8c8c8" fill-opacity="0.6" stroke="#b0b0b0" stroke-width="1"/>
<path d="M618.4 511.4 L623.6 516.6 M623.6 511.4 L618.4 516.6" stroke="#7a7a7a" stroke-width="3.2"/>
<path d="M618.4 511.4 L623.6 516.6 M623.6 511.4 L618.4 516.6" stroke="#ffffff" stroke-width="1.4"/>
<rect x="637" y="499" width="19.9" height="19.6" fill="#ececec"/>
<path d="M637.5 499 V519.6M642.8 499 V519.6M647.9 499 V519.6M652.6 499 V519.6M657.4 499 V519.6M637 499.5 H657.9M637 504.8 H657.9M637 509.5 H657.9M637 514.3 H657.9M637 519.1 H657.9" stroke="#b4b4b4" stroke-width="1.2" fill="none"/>
<rect x="642.8" y="499.5" width="5.1" height="19.6" fill="#c8c8c8" fill-opacity="0.6" stroke="#b0b0b0" stroke-width="1"/>
<path d="M650.4 511.4 L655.6 516.6 M655.6 511.4 L650.4 516.6" stroke="#7a7a7a" stroke-width="3.2"/>
<path d="M650.4 511.4 L655.6 516.6 M655.6 511.4 L650.4 516.6" stroke="#ffffff" stroke-width="1.4"/>

<!-- pi button icon -->
<rect x="680.5" y="499.5" width="19" height="19" rx="2.5" fill="#7290be" stroke="#2e4e86" stroke-width="1.2"/>
<rect x="682" y="501" width="16" height="16" rx="1.5" fill="none" stroke="#9cb8dc" stroke-width="0.8"/>
<path d="M683.5 505 Q684.5 503.3 687 503.3 H697 V505.3 H694.3 V512.5 Q694.3 514.5 696.5 514 L696.8 515 Q695 516.5 693.3 516 Q692 515.5 692 513 V505.3 H688.8 Q688.8 510.5 686.5 515.8 H684.8 Q686.8 510 686.8 505.3 Q685 505.3 684.3 506.3 Z" fill="#c4e4ff" stroke="#1e3a6a" stroke-width="0.8" stroke-linejoin="round"/>
</svg>

<!-- ===== formula ===== -->
<svg style="left:0;top:0" width="799" height="575">
<g fill="#ff00ff"><rect x="350" y="195" width="1" height="4"/><rect x="350" y="195" width="4" height="1"/><rect x="426" y="195" width="1" height="4"/><rect x="423" y="195" width="4" height="1"/><rect x="350" y="266" width="1" height="4"/><rect x="350" y="269" width="4" height="1"/><rect x="426" y="266" width="1" height="4"/><rect x="423" y="269" width="4" height="1"/><rect x="353" y="252" width="1" height="4"/><rect x="353" y="255" width="4" height="1"/><rect x="407" y="214" width="1" height="4"/><rect x="407" y="214" width="4" height="1"/><rect x="421" y="214" width="1" height="4"/><rect x="418" y="214" width="4" height="1"/><rect x="407" y="252" width="1" height="4"/><rect x="407" y="255" width="4" height="1"/><rect x="423" y="252" width="1" height="4"/><rect x="420" y="255" width="4" height="1"/></g>
<path d="M353.3 247.2 L355.5 244.4 L362.8 254.3 L371.8 210.5 H424" fill="none" stroke="#1a1a8a" stroke-width="1.1"/>
<path d="M355.3 244.8 L362.6 253.6" stroke="#1a1a8a" stroke-width="1.5"/>
<path d="M374.3 234 Q375.5 231.3 378.3 232.2 Q381 233.2 384 231.3 L373.3 241.5 Q375.8 239.8 378.6 240.9 Q381.3 242 383 239.5" fill="none" stroke="#1a1a8a" stroke-width="1.6" stroke-linejoin="round"/>
<path d="M389.1 236.9 H402.3 M395.7 230.2 V243.2" stroke="#1a1a8a" stroke-width="1"/>
<path d="M408.1 236.9 H422" stroke="#1a1a8a" stroke-width="1.1"/>
<path d="M409.8 232.5 L413.3 219 Q414.6 214.7 417.8 214.6 Q420.6 214.6 420.2 217.6 Q419.7 220.2 416.3 220.8 Q419.8 221.5 419.5 225 Q419 228.8 415.4 229 Q413 229.1 412.1 227.3" fill="none" stroke="#1a1a8a" stroke-width="1.25"/>
<path d="M416.3 220.8 H414.2" stroke="#1a1a8a" stroke-width="1"/>
<rect x="410.5" y="240.5" width="7" height="14" fill="none" stroke="#0000ff" stroke-width="1"/>
<rect x="412" y="240" width="1" height="15" fill="#000"/>
</svg>
</body></html>
